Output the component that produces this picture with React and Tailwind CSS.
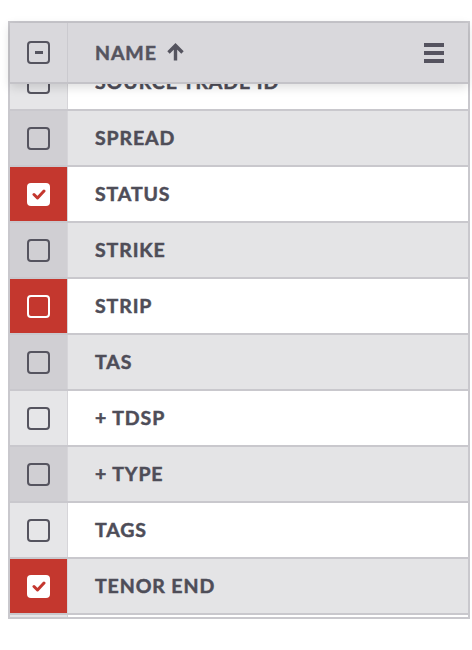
import React from 'react';

const rows = [
  { name: 'SOURCE TRADE ID', shade: 'white', checked: false, selected: false },
  { name: 'SPREAD', shade: 'gray', checked: false, selected: false },
  { name: 'STATUS', shade: 'white', checked: true, selected: true },
  { name: 'STRIKE', shade: 'gray', checked: false, selected: false },
  { name: 'STRIP', shade: 'white', checked: false, selected: true },
  { name: 'TAS', shade: 'gray', checked: false, selected: false },
  { name: '+ TDSP', shade: 'white', checked: false, selected: false },
  { name: '+ TYPE', shade: 'gray', checked: false, selected: false },
  { name: 'TAGS', shade: 'white', checked: false, selected: false },
  { name: 'TENOR END', shade: 'gray', checked: true, selected: true },
  { name: 'TENOR START', shade: 'white', checked: false, selected: false },
];

const Checkbox = ({ checked, selected }) => {
  if (checked) {
    return (
      <div className="flex h-[23px] w-[23px] items-center justify-center rounded-[4px] bg-white">
        <svg width="14" height="11" viewBox="0 0 14 11" fill="none">
          <path d="M2 5.5 L5.5 9 L12 2" stroke="#c4372e" strokeWidth="3" strokeLinecap="round" strokeLinejoin="round" />
        </svg>
      </div>
    );
  }
  return (
    <div
      className={`h-[23px] w-[23px] rounded-[4px] border-2 ${selected ? 'border-white' : 'border-[#55545f]'}`}
    />
  );
};

const Row = ({ row, first }) => {
  const cellBg = row.selected ? 'bg-[#c4372e]' : row.shade === 'gray' ? 'bg-[#d0cfd3]' : 'bg-[#e6e6e8]';
  const bodyBg = row.shade === 'gray' ? 'bg-[#e4e4e6]' : 'bg-white';
  return (
    <div className={`flex h-[56px] shrink-0 border-b-2 border-[#c9c8cd] ${first ? 'mt-[-29px]' : ''}`}>
      <div className={`flex w-[58px] items-center justify-center border-r border-[#d6d5d9] ${cellBg}`}>
        <Checkbox checked={row.checked} selected={row.selected} />
      </div>
      <div className={`flex flex-1 items-center pl-[27px] ${bodyBg}`}>
        <span className="whitespace-nowrap font-['Lato',sans-serif] text-[19.5px] font-bold tracking-[0.9px] text-[#4e4d58] [-webkit-text-stroke:0.5px_#4e4d58]">
          {row.name}
        </span>
      </div>
    </div>
  );
};

export default function App() {
  return (
    <div className="h-[650px] w-[472px] bg-white pl-[8px] pt-[21px]">
      <div className="w-[462px] border-2 border-[#c9c8cd]">
        <div className="relative z-10 flex h-[61px] border-b-2 border-[#c4c3c8] bg-[#d9d8dc] shadow-[0_3px_10px_rgba(0,0,0,0.14)]">
          <div className="flex w-[58px] items-center justify-center border-r border-[#cbcacf]">
            <div className="flex h-[23px] w-[23px] items-center justify-center rounded-[4px] border-2 border-[#55545f]">
              <div className="h-[3px] w-[8px] bg-[#55545f]" />
            </div>
          </div>
          <div className="flex flex-1 items-center pl-[27px] pr-[24px]">
            <span className="font-['Lato',sans-serif] text-[19.5px] font-bold tracking-[0.9px] text-[#55545f] [-webkit-text-stroke:0.5px_#55545f]">NAME</span>
            <svg className="ml-[9px]" width="19" height="19" viewBox="0 0 19 19" fill="none">
              <path d="M9.5 17.5 V3 M2.5 9.5 L9.5 2.5 L16.5 9.5" stroke="#55545f" strokeWidth="3.4" strokeLinecap="butt" strokeLinejoin="miter" />
            </svg>
            <div className="ml-auto flex flex-col gap-[4px]">
              <div className="h-[4px] w-[20px] bg-[#55535f]" />
              <div className="h-[4px] w-[20px] bg-[#55535f]" />
              <div className="h-[4px] w-[20px] bg-[#55535f]" />
            </div>
          </div>
        </div>
        <div className="flex h-[533px] flex-col overflow-hidden">
          {rows.map((row, i) => (
            <Row key={row.name} row={row} first={i === 0} />
          ))}
        </div>
      </div>
    </div>
  );
}
